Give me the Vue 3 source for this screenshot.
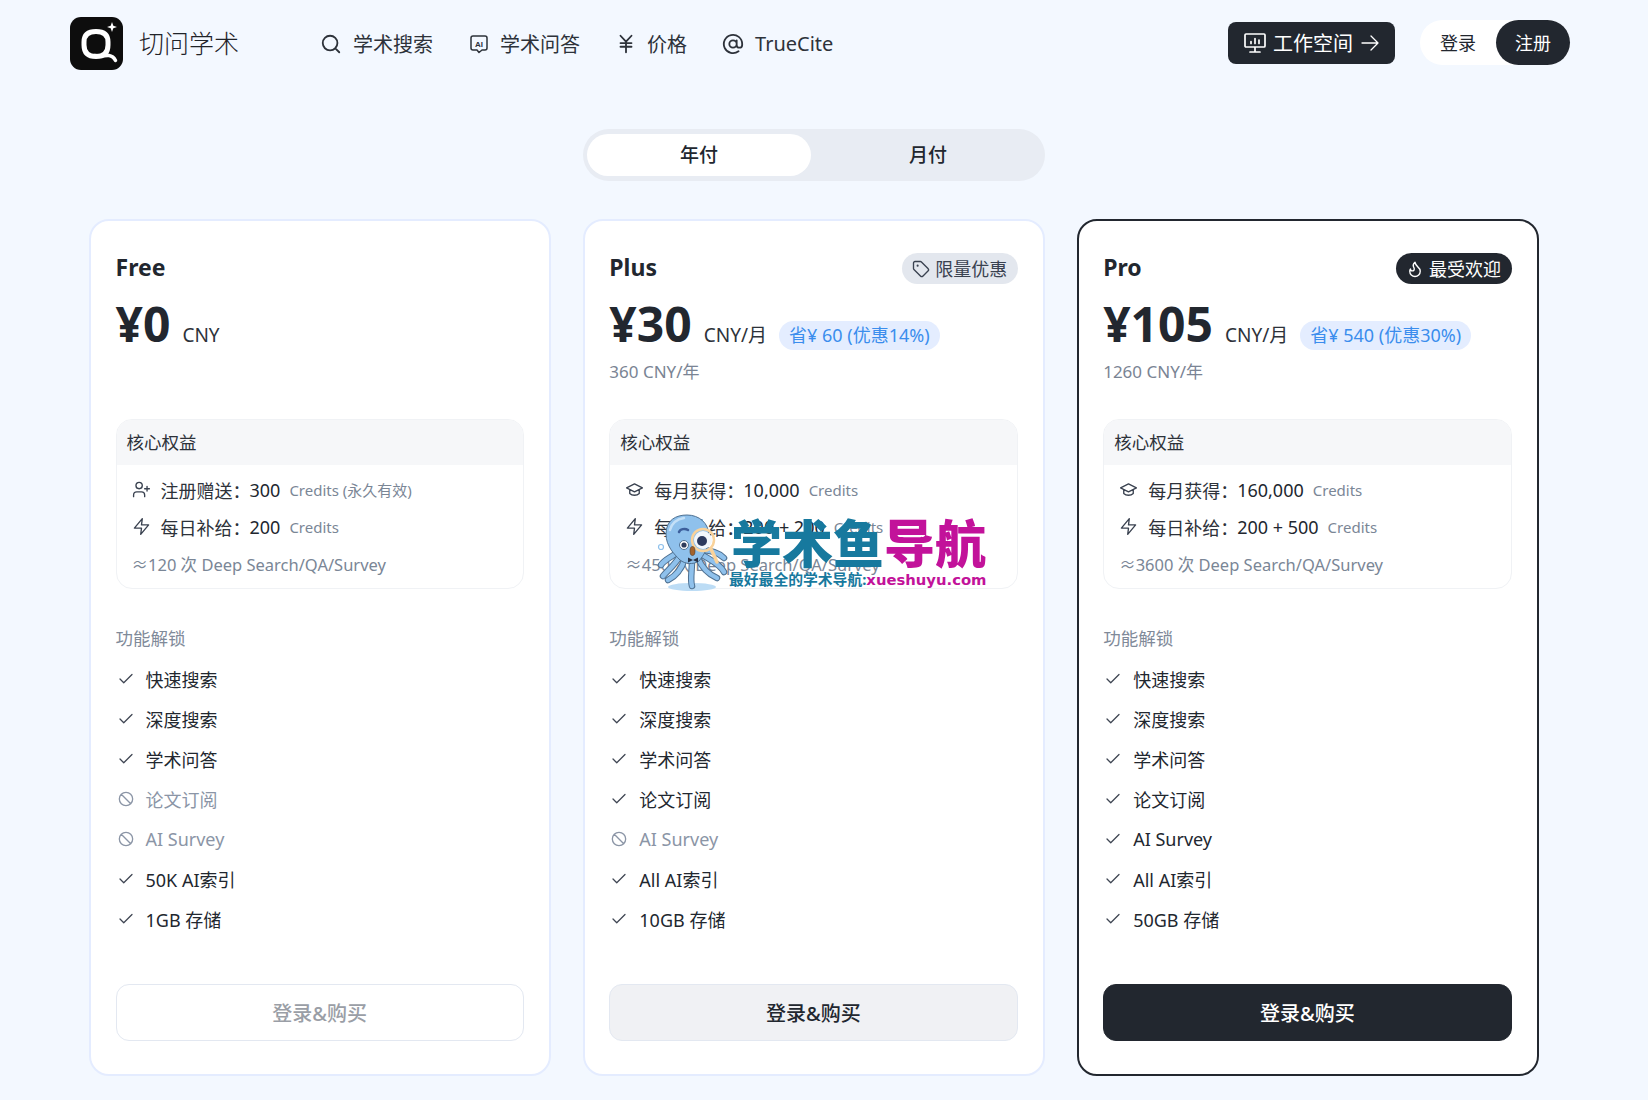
<script setup>
const icons = {
  search: 'M3 11a8 8 0 1 0 16 0a8 8 0 1 0-16 0M21 21l-4.3-4.3',
  yen: 'M12 9.5V21M12 9.5L6 3M12 9.5L18 3M6 15h12M6 11h12',
  at: 'M8 12a4 4 0 1 0 8 0a4 4 0 1 0-8 0M16 8v5a3 3 0 0 0 6 0v-1a10 10 0 1 0-4 8',
  monitor: 'M3 3h18a1 1 0 0 1 1 1v11a1 1 0 0 1-1 1H3a1 1 0 0 1-1-1V4a1 1 0 0 1 1-1zM12 16v5M7 21h10M8 12.5v-2M12 12.5v-5M16 12.5v-3.5',
  arrow: 'M4 12h16M13 5l7 7-7 7',
  tag: 'M12.586 2.586A2 2 0 0 0 11.172 2H4a2 2 0 0 0-2 2v7.172a2 2 0 0 0 .586 1.414l8.704 8.704a2.426 2.426 0 0 0 3.42 0l6.58-6.58a2.426 2.426 0 0 0 0-3.42zM7.5 7a.5.5 0 1 0 0 1a.5.5 0 1 0 0-1',
  flame: 'M8.5 14.5A2.5 2.5 0 0 0 11 12c0-1.38-.5-2-1-3-1.072-2.143-.224-4.054 2-6 .5 2.5 2 4.9 4 6.5 2 1.6 3 3.5 3 5.5a7 7 0 1 1-14 0c0-1.153.433-2.294 1-3a2.5 2.5 0 0 0 2.5 2.5z',
  user: 'M16 21v-2a4 4 0 0 0-4-4H6a4 4 0 0 0-4 4v2M5 7a4 4 0 1 0 8 0a4 4 0 1 0-8 0M19 8v6M16 11h6',
  zap: 'M13 2 3 14h9l-1 8 10-12h-9l1-8z',
  cap: 'M2 10l10-5 10 5-10 5zM6 12v5c3 3 9 3 12 0v-5',
  check: 'M20 6 9 17l-5-5',
  ban: 'M2 12a10 10 0 1 0 20 0a10 10 0 1 0-20 0M4.9 4.9l14.2 14.2'
}

const navLinks = [
  { label: '学术搜索', icon: 'search' },
  { label: '学术问答', icon: 'ai' },
  { label: '价格', icon: 'yen' },
  { label: 'TrueCite', icon: 'at' }
]

const f = (label, off = false) => ({ label, off })

const plans = [
  {
    name: 'Free', price: '¥0', unit: 'CNY', save: '', sub: '', badge: null, kind: 'free',
    rows: [
      { icon: 'user', label: '注册赠送：', value: '300', note: 'Credits (永久有效)' },
      { icon: 'zap', label: '每日补给：', value: '200', note: 'Credits' }
    ],
    approx: '≈120 次 Deep Search/QA/Survey',
    features: [f('快速搜索'), f('深度搜索'), f('学术问答'), f('论文订阅', true), f('AI Survey', true), f('50K AI索引'), f('1GB 存储')]
  },
  {
    name: 'Plus', price: '¥30', unit: 'CNY/月', save: '省¥ 60 (优惠14%)', sub: '360 CNY/年',
    badge: { icon: 'tag', label: '限量优惠', dark: false }, kind: 'plus',
    rows: [
      { icon: 'cap', label: '每月获得：', value: '10,000', note: 'Credits' },
      { icon: 'zap', label: '每日补给：', value: '200 + 200', note: 'Credits' }
    ],
    approx: '≈450 次 Deep Search/QA/Survey',
    features: [f('快速搜索'), f('深度搜索'), f('学术问答'), f('论文订阅'), f('AI Survey', true), f('All AI索引'), f('10GB 存储')]
  },
  {
    name: 'Pro', price: '¥105', unit: 'CNY/月', save: '省¥ 540 (优惠30%)', sub: '1260 CNY/年',
    badge: { icon: 'flame', label: '最受欢迎', dark: true }, kind: 'pro',
    rows: [
      { icon: 'cap', label: '每月获得：', value: '160,000', note: 'Credits' },
      { icon: 'zap', label: '每日补给：', value: '200 + 500', note: 'Credits' }
    ],
    approx: '≈3600 次 Deep Search/QA/Survey',
    features: [f('快速搜索'), f('深度搜索'), f('学术问答'), f('论文订阅'), f('AI Survey'), f('All AI索引'), f('50GB 存储')]
  }
]
</script>

<template>
  <div class="page">
    <header class="nav">
      <svg class="logo" viewBox="0 0 53 53">
        <rect width="53" height="53" rx="11" fill="#0d0d0d" />
        <path d="M26 39.500c-7.500 0-12-3.500-12-11.500v-3c0-7.500 4.500-10.500 12-10.500s12 3 12 10.500v3c0 8-4.500 11.500-12 11.500z" fill="none" stroke="#fff" stroke-width="5" />
        <path d="M25 38.500c6 1.500 10-.5 14 0c3 .4 5 2 6.500 5" fill="none" stroke="#fff" stroke-width="3.500" stroke-linecap="round" />
        <path d="M42 5l1.300 3.700L47 10l-3.700 1.300L42 15l-1.300-3.700L37 10l3.700-1.300z" fill="#fff" />
      </svg>
      <span class="brand">切问学术</span>
      <nav class="links">
        <a v-for="l in navLinks" :key="l.label" class="link" :class="'link-' + l.icon">
          <svg v-if="l.icon === 'ai'" class="ico ico-ai" viewBox="0 0 20 20">
            <path d="M4 2h12a2 2 0 0 1 2 2v10a2 2 0 0 1-2 2h-3l-3 2.500L8 16H4a2 2 0 0 1-2-2V4a2 2 0 0 1 2-2z" />
            <text x="10" y="12.500" text-anchor="middle" class="ai-text">AI</text>
          </svg>
          <svg v-else class="ico ico-nav" viewBox="0 0 24 24"><path :d="icons[l.icon]" /></svg>
          <span>{{ l.label }}</span>
        </a>
      </nav>
      <div class="nav-right">
        <button class="workspace">
          <svg class="ico ico-ws" viewBox="0 0 24 24"><path :d="icons.monitor" /></svg>
          <span>工作空间</span>
          <svg class="ico ico-arrow" viewBox="0 0 24 24"><path :d="icons.arrow" /></svg>
        </button>
        <div class="auth">
          <span class="login">登录</span>
          <span class="signup">注册</span>
        </div>
      </div>
    </header>

    <main class="main">
      <div class="toggle">
        <span class="opt active">年付</span>
        <span class="opt">月付</span>
      </div>

      <section class="cards">
        <article v-for="p in plans" :key="p.name" class="card" :class="p.kind">
          <div class="head">
            <div class="title-row">
              <h2 class="name">{{ p.name }}</h2>
              <span v-if="p.badge" class="badge" :class="{ dark: p.badge.dark }">
                <svg class="ico ico-badge" viewBox="0 0 24 24"><path :d="icons[p.badge.icon]" /></svg>
                {{ p.badge.label }}
              </span>
            </div>
            <div class="price-row">
              <span class="price">{{ p.price }}</span>
              <span class="unit">{{ p.unit }}</span>
              <span v-if="p.save" class="save">{{ p.save }}</span>
            </div>
            <div v-if="p.sub" class="sub">{{ p.sub }}</div>
          </div>

          <div class="box">
            <div class="box-head">核心权益</div>
            <div class="box-body">
              <div v-for="r in p.rows" :key="r.label" class="row">
                <svg class="ico ico-row" viewBox="0 0 24 24"><path :d="icons[r.icon]" /></svg>
                <span class="row-label">{{ r.label }}</span>
                <span class="row-value">{{ r.value }}</span>
                <span class="row-note">{{ r.note }}</span>
              </div>
              <div class="row approx">{{ p.approx }}</div>
            </div>
          </div>

          <div class="feat-title">功能解锁</div>
          <ul class="features">
            <li v-for="x in p.features" :key="x.label" class="feature" :class="{ off: x.off }">
              <svg class="ico ico-feat" viewBox="0 0 24 24"><path :d="x.off ? icons.ban : icons.check" /></svg>
              <span>{{ x.label }}</span>
            </li>
          </ul>

          <button class="buy">登录&amp;购买</button>
        </article>
      </section>
    </main>

    <div class="watermark">
      <svg class="octo" viewBox="0 0 90 90">
        <ellipse cx="38" cy="81" rx="24" ry="4" fill="#bcdcf5" />
        <g fill="none" stroke-linecap="round" stroke="#4f7192" stroke-width="6.500">
          <path d="M24 46C16 52 10 54 7 59" />
          <path d="M26 50C20 60 14 64 9 70" />
          <path d="M31 52C28 62 22 70 14 74" />
          <path d="M38 54C38 66 36 74 38 80" />
          <path d="M44 52C48 62 54 68 63 72" />
          <path d="M47 48C56 54 66 58 70 66" />
          <path d="M46 44C56 44 64 46 70 52" />
        </g>
        <g fill="none" stroke-linecap="round" stroke="#8fc1ec" stroke-width="4.500">
          <path d="M24 46C16 52 10 54 7 59" />
          <path d="M26 50C20 60 14 64 9 70" />
          <path d="M31 52C28 62 22 70 14 74" />
          <path d="M38 54C38 66 36 74 38 80" />
          <path d="M44 52C48 62 54 68 63 72" />
          <path d="M47 48C56 54 66 58 70 66" />
          <path d="M46 44C56 44 64 46 70 52" />
        </g>
        <path d="M12 28C12 14 22 9 33 9c12 0 22 8 22 21 0 12-6 20-10 25-6 4-14 3-19-1C20 48 12 40 12 28z" fill="#8fc1ec" stroke="#4f7192" stroke-width="1" />
        <path d="M16 24C18 16 24 13 30 12" fill="none" stroke="#c4e0f7" stroke-width="2.500" stroke-linecap="round" />
        <path d="M25 26c1-3 6-4 9-2" fill="none" stroke="#3d5f9c" stroke-width="2.500" stroke-linecap="round" />
        <circle cx="30" cy="39" r="4.500" fill="#fff" stroke="#4f7192" />
        <circle cx="30" cy="39" r="2.600" fill="#2f3d5c" />
        <circle cx="49" cy="34" r="9" fill="#f2f7fc" />
        <circle cx="48" cy="35" r="5" fill="#2c3a5e" />
        <circle cx="49" cy="34" r="11" fill="none" stroke="#f9d29a" stroke-width="2.500" />
        <path d="M57 43l6 13" fill="none" stroke="#f9d29a" stroke-width="3.500" stroke-linecap="round" />
        <ellipse cx="38.500" cy="45" rx="2.500" ry="4.500" fill="#a4632c" stroke="#4f3a2a" stroke-width=".6" />
        <path d="M39 54l-5-2.500v5zM39 54l5-2.500v5z" fill="#2a3245" />
        <circle cx="7" cy="41" r="2.500" fill="none" stroke="#8fc1ec" stroke-width="1.200" />
      </svg>
      <div class="wm-text">
        <div class="wm-main"><span class="wm-blue">学术鱼</span><span class="wm-pink">导航</span></div>
        <div class="wm-sub"><span class="wm-blue">最好最全的学术导航:</span><span class="wm-pink wm-latin">xueshuyu.com</span></div>
      </div>
    </div>
  </div>
</template>

<style>
html, body { margin: 0; background: #f3f8ff; }
</style>

<style scoped>
.page {
  position: relative;
  width: 1648px;
  min-height: 1100px;
  background: #f3f8ff;
  color: #22272f;
  font-family: "Noto Sans", "Noto Sans CJK SC", sans-serif;
  overflow: hidden;
}
.ico path { fill: none; stroke: currentColor; stroke-linecap: round; stroke-linejoin: round; }

.nav {
  display: flex;
  align-items: center;
  padding: 17px 78px 0 70px;
}
.logo { width: 53px; height: 53px; flex: none; }
.brand { margin-left: 16px; padding-bottom: 4px; font-size: 25px; font-weight: 300; color: #1f2329; }
.links { display: flex; align-items: center; gap: 35px; margin-left: 81px; }
.link { display: flex; align-items: center; gap: 11px; font-size: 20px; color: #2d323a; }
.link-ai { margin-left: 1px; }
.link-yen { gap: 10px; }
.ico-nav { width: 22px; height: 22px; stroke-width: 2; flex: none; }
.ico-ai { width: 20px; height: 20px; stroke-width: 1.5; flex: none; }
.ai-text { font-size: 8px; font-weight: 700; fill: currentColor; font-family: "Liberation Sans", sans-serif; }

.nav-right { display: flex; align-items: center; gap: 25px; margin: -2px 0 0 auto; }
.workspace {
  display: flex; align-items: center; gap: 6px;
  height: 42px; padding: 0 13px 0 15px;
  border: 0; border-radius: 8px;
  background: #22272f; color: #fff;
  font: inherit; font-size: 20px;
}
.ico-ws { width: 24px; height: 24px; stroke-width: 1.7; }
.ico-arrow { width: 24px; height: 24px; stroke-width: 1.3; margin-left: -1px; }
.auth {
  display: flex; align-items: center;
  height: 45px; border-radius: 23px;
  background: #fff; font-size: 18px;
}
.login { width: 76px; text-align: center; padding-bottom: 2px; }
.signup {
  display: flex; align-items: center; justify-content: center;
  box-sizing: border-box;
  width: 74px; height: 45px; padding-bottom: 2px; border-radius: 23px;
  background: #22272f; color: #fff;
}

.main { margin: 59px 0 0 89px; width: 1450px; }
.toggle {
  display: grid; grid-template-columns: 224px 1fr;
  width: 458px; height: 42px;
  margin: 0 auto; padding: 5px 0 5px 4px;
  border-radius: 26px; background: #e8ecf3;
}
.opt {
  display: flex; align-items: center; justify-content: center;
  padding-bottom: 3px;
  border-radius: 21px; font-size: 19px; font-weight: 500;
}
.opt.active { background: #fff; }

.cards {
  display: grid; grid-template-columns: repeat(3, 1fr); gap: 31.5px;
  margin-top: 38px;
}
.card {
  display: flex; flex-direction: column;
  padding: 32px 25.500px 33px 24.500px;
  border: 2px solid #e4ecff; border-radius: 20px;
  background: #fff;
}
.card.pro { border-color: #22272f; }
.head { height: 166px; }
.title-row { display: flex; align-items: center; justify-content: space-between; height: 31px; }
.name { margin: 0; padding-bottom: 2px; font-size: 23px; font-weight: 700; line-height: 29px; }
.badge {
  display: flex; align-items: center; gap: 5px;
  box-sizing: border-box;
  height: 31px; padding: 0 10.500px 2px;
  border-radius: 16px;
  background: #e3e7ee; color: #3a4250;
  font-size: 18px;
}
.badge.dark { background: #22272f; color: #fff; }
.ico-badge { width: 18px; height: 18px; stroke-width: 1.8; margin-top: 2px; }
.price-row { display: flex; align-items: baseline; margin-top: 9px; height: 61px; }
.price { font-size: 48px; font-weight: 700; line-height: 62px; }
.unit { margin-left: 12px; font-size: 19px; color: #2d323a; }
.save {
  margin-left: 12px; padding: 2px 10px;
  border-radius: 15px;
  background: #e4edff; color: #3b8ded;
  font-size: 18px; line-height: 25px;
}
.sub { margin-top: 6px; font-size: 17px; line-height: 24px; color: #7a8494; }

.box {
  height: 170px; box-sizing: border-box;
  border: 1px solid #f0f2f5; border-radius: 16px;
  overflow: hidden;
}
.box-head {
  height: 45px; padding-left: 10px;
  background: #f6f7f9;
  font-size: 17.500px; line-height: 45px; color: #2d323a;
}
.box-body { padding: 6px 15px 0 15px; }
.row { display: flex; align-items: center; height: 37px; font-size: 18px; }
.ico-row { width: 19px; height: 19px; flex: none; margin-right: 10px; stroke-width: 1.7; color: #3a4250; }
.row-label { color: #2d323a; margin-right: -1px; }
.row-value { color: #22272f; }
.row-note { margin-left: 9px; font-size: 15px; color: #7a8696; }
.approx { font-size: 16.500px; color: #7a8696; }

.feat-title { margin-top: 37px; font-size: 17.500px; line-height: 24px; color: #808a99; }
.features { margin: 9px 0 0; padding: 0; list-style: none; }
.feature { display: flex; align-items: center; height: 40px; font-size: 18px; color: #22272f; }
.feature.off { color: #8b95a6; }
.ico-feat { width: 18px; height: 18px; margin: 0 11px 0 1px; flex: none; stroke-width: 1.7; color: #3f4653; }
.feature.off .ico-feat { width: 16px; height: 16px; margin: 0 12px 0 2px; color: #8b95a6; stroke-width: 2; }

.buy {
  display: block; width: 100%; height: 57px; margin-top: 45px;
  border: 1px solid #e3e8f1; border-radius: 13px;
  background: #fff; color: #9a9ea6;
  font: inherit; font-size: 20px; font-weight: 500;
}
.plus .buy { background: #f0f1f4; color: #22272f; }
.pro .buy { background: #22272f; border-color: #22272f; color: #fff; }

.watermark {
  position: absolute; left: 654px; top: 506px;
  display: flex; align-items: flex-start;
  pointer-events: none;
}
.octo { width: 90px; height: 90px; flex: none; margin-right: -15px; }
.wm-text { position: relative; margin-top: 9px; }
.wm-main { font-size: 51px; font-weight: 900; line-height: 56px; white-space: nowrap; margin-left: 2px; }
.wm-sub { font-size: 14.800px; font-weight: 700; line-height: 18px; white-space: nowrap; margin-top: -1px; }
.wm-latin { font-family: "DejaVu Sans", sans-serif; font-size: 14.800px; }
.wm-blue { color: #17799e; }
.wm-pink { color: #c2129a; }
</style>
